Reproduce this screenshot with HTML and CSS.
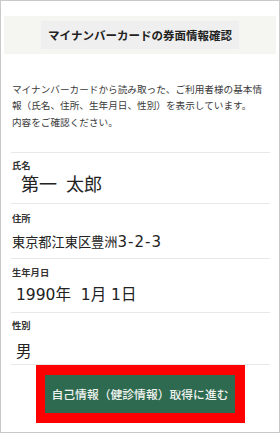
FILE: index.html
```html
<!DOCTYPE html>
<html lang="ja">
<head>
<meta charset="utf-8">
<link rel="stylesheet" href="styles.css">
</head>
<body>
<div class="frame">
  <div class="header"><h1 class="title">マイナンバーカードの券面情報確認</h1></div>
  <p class="intro">マイナンバーカードから読み取った、ご利用者様の基本情報（氏名、住所、生年月日、性別）を表示しています。<br>内容をご確認ください。</p>
  <div class="item item-name">
    <div class="label">氏名</div>
    <div class="value value-name">第一&ensp;太郎</div>
  </div>
  <div class="item item-address">
    <div class="label">住所</div>
    <div class="value value-address">東京都江東区豊洲<span class="num">3-2-3</span></div>
  </div>
  <div class="item item-birth">
    <div class="label">生年月日</div>
    <div class="value value-ind">1990年&nbsp;&nbsp;1月&nbsp;1日</div>
  </div>
  <div class="item item-sex">
    <div class="label">性別</div>
    <div class="value value-ind">男</div>
  </div>
  <div class="actions">
    <div class="highlight">
      <button class="btn" type="button">自己情報（健診情報）取得に進む</button>
    </div>
  </div>
</div>
</body>
</html>
```
FILE: styles.css
```css
html, body {
  margin: 0;
  padding: 0;
  background: #ffffff;
}
body {
  font-family: "Noto Sans CJK JP", "Noto Sans", sans-serif;
  color: #222;
}
.frame {
  box-sizing: border-box;
  width: 280px;
  height: 433px;
  border: 1px solid #c9c9c9;
  overflow: hidden;
}
.header {
  margin: 15px 3px 0 3px;
  height: 38px;
  background: #f5f5f2;
  display: flex;
  align-items: center;
  justify-content: center;
}
.title {
  margin: 0;
  height: 28px;
  padding: 0 7px;
  background: #efefef;
  font-size: 11.5px;
  font-weight: 700;
  line-height: 28px;
  color: #222;
}
.intro {
  margin: 27px 9px 0 10px;
  padding: 0 0 22px 1px;
  font-size: 9.65px;
  line-height: 16.3px;
  color: #3a3a3a;
  border-bottom: 1px solid #e8e8e8;
}
.item {
  margin: 0 9px 0 10px;
  padding: 5px 0 6px 1px;
  border-bottom: 1px solid #e8e8e8;
}
.label {
  font-size: 9.3px;
  font-weight: 700;
  line-height: 14px;
  color: #333;
}
.value {
  margin-top: 1px;
  font-family: "DejaVu Sans", "Noto Sans CJK JP", sans-serif;
  font-size: 15.5px;
  line-height: 24px;
  color: #222;
  white-space: nowrap;
}
.item-address {
  padding-top: 7px;
  padding-bottom: 3px;
}
.item-address .value {
  margin-top: 5px;
}
.item-birth {
  padding-top: 6px;
  padding-bottom: 5px;
}
.item-birth .value {
  margin-top: 4px;
}
.item-sex {
  padding-top: 5px;
  padding-bottom: 0;
}
.item-sex .value {
  margin-top: 8px;
}
.value-name {
  padding-left: 9px;
  font-size: 18px;
}
.value-address {
  font-size: 13.2px;
}
.num {
  font-size: 15px;
  letter-spacing: 1px;
}
.value-ind {
  padding-left: 4px;
}
.actions {
  display: flex;
  justify-content: center;
  padding-left: 1px;
}
.highlight {
  border: 10px solid #ff0000;
  border-left-width: 9px;
  display: flex;
}
.btn {
  width: 190px;
  height: 38px;
  margin: 0;
  padding: 0;
  border: none;
  background: #2e6a4f;
  color: #eef3ef;
  font-family: "Noto Sans CJK JP", "Noto Sans", sans-serif;
  font-size: 11.8px;
  font-weight: 500;
  line-height: 38px;
}
```
